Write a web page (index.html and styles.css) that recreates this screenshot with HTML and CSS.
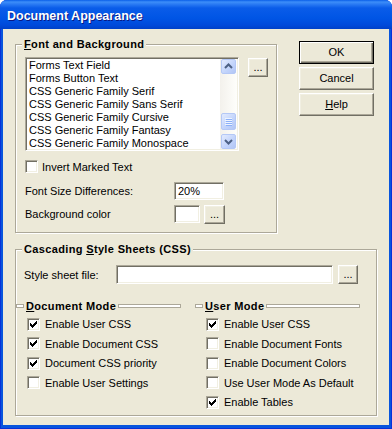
FILE: index.html
```html
<!DOCTYPE html>
<html>
<head>
<meta charset="utf-8">
<link rel="stylesheet" href="styles.css">
</head>
<body>
<div class="window">
  <div class="titlebar"><span class="title">Document Appearance</span></div>
  <div class="client">
    <div class="top">
      <fieldset class="group g-font">
        <legend><u>F</u>ont and Background</legend>
        <div class="list-row">
          <div class="listbox">
            <ul class="items">
              <li>Forms Text Field</li>
              <li>Forms Button Text</li>
              <li>CSS Generic Family Serif</li>
              <li>CSS Generic Family Sans Serif</li>
              <li>CSS Generic Family Cursive</li>
              <li>CSS Generic Family Fantasy</li>
              <li>CSS Generic Family Monospace</li>
            </ul>
            <div class="scrollbar">
              <div class="sb-btn"><svg width="13" height="13" viewBox="0 0 13 13"><path d="M3 8L6.5 4.5L10 8" fill="none" stroke="#4D6185" stroke-width="2"/></svg></div>
              <div class="sb-space"></div>
              <div class="sb-thumb"><svg width="7" height="8" viewBox="0 0 7 8"><path d="M0 0.5h7M0 2.5h7M0 4.5h7M0 6.5h7" stroke="#EEF4FE" stroke-width="1"/><path d="M1 1.5h7M1 3.5h7M1 5.5h7M1 7.5h7" stroke="#8CB0F8" stroke-width="1"/></svg></div>
              <div class="sb-btn"><svg width="13" height="13" viewBox="0 0 13 13"><path d="M3 5L6.5 8.5L10 5" fill="none" stroke="#4D6185" stroke-width="2"/></svg></div>
            </div>
          </div>
          <button class="btn dots">...</button>
        </div>
        <div class="check-row first"><span class="cb"></span><span>Invert Marked Text</span></div>
        <div class="field-row size-row"><span class="lbl">Font Size Differences:</span><span class="input size">20%</span></div>
        <div class="field-row bg-row"><span class="lbl">Background color</span><span class="input swatch"></span><button class="btn dots small">...</button></div>
      </fieldset>
      <div class="buttons">
        <button class="btn cmd default">OK</button>
        <button class="btn cmd">Cancel</button>
        <button class="btn cmd"><u>H</u>elp</button>
      </div>
    </div>
    <fieldset class="group g-css">
      <legend>Cascading <u>S</u>tyle Sheets (CSS)</legend>
      <div class="field-row file-row"><span class="lbl file-lbl">Style sheet file:</span><span class="input file"></span><button class="btn dots file-btn">...</button></div>
      <div class="modes">
        <div class="mode">
          <div class="mode-head"><span class="sep short"></span><span class="mode-title"><u>D</u>ocument Mode</span><span class="sep long"></span></div>
          <div class="check-row"><span class="cb"><svg class="tick" width="11" height="11" viewBox="0 0 11 11"><path d="M8 2h1v1h-1zM7 3h2v1h-2zM2 4h1v1h-1zM6 4h3v1h-3zM2 5h2v1h-2zM5 5h3v1h-3zM2 6h5v1h-5zM3 7h3v1h-3zM4 8h1v1h-1z" fill="#000"/></svg></span><span>Enable User CSS</span></div>
          <div class="check-row"><span class="cb"><svg class="tick" width="11" height="11" viewBox="0 0 11 11"><path d="M8 2h1v1h-1zM7 3h2v1h-2zM2 4h1v1h-1zM6 4h3v1h-3zM2 5h2v1h-2zM5 5h3v1h-3zM2 6h5v1h-5zM3 7h3v1h-3zM4 8h1v1h-1z" fill="#000"/></svg></span><span>Enable Document CSS</span></div>
          <div class="check-row"><span class="cb"><svg class="tick" width="11" height="11" viewBox="0 0 11 11"><path d="M8 2h1v1h-1zM7 3h2v1h-2zM2 4h1v1h-1zM6 4h3v1h-3zM2 5h2v1h-2zM5 5h3v1h-3zM2 6h5v1h-5zM3 7h3v1h-3zM4 8h1v1h-1z" fill="#000"/></svg></span><span>Document CSS priority</span></div>
          <div class="check-row"><span class="cb"></span><span>Enable User Settings</span></div>
        </div>
        <div class="mode">
          <div class="mode-head"><span class="sep short"></span><span class="mode-title"><u>U</u>ser Mode</span><span class="sep long"></span></div>
          <div class="check-row"><span class="cb"><svg class="tick" width="11" height="11" viewBox="0 0 11 11"><path d="M8 2h1v1h-1zM7 3h2v1h-2zM2 4h1v1h-1zM6 4h3v1h-3zM2 5h2v1h-2zM5 5h3v1h-3zM2 6h5v1h-5zM3 7h3v1h-3zM4 8h1v1h-1z" fill="#000"/></svg></span><span>Enable User CSS</span></div>
          <div class="check-row"><span class="cb"></span><span>Enable Document Fonts</span></div>
          <div class="check-row"><span class="cb"></span><span>Enable Document Colors</span></div>
          <div class="check-row"><span class="cb"></span><span>Use User Mode As Default</span></div>
          <div class="check-row"><span class="cb"><svg class="tick" width="11" height="11" viewBox="0 0 11 11"><path d="M8 2h1v1h-1zM7 3h2v1h-2zM2 4h1v1h-1zM6 4h3v1h-3zM2 5h2v1h-2zM5 5h3v1h-3zM2 6h5v1h-5zM3 7h3v1h-3zM4 8h1v1h-1z" fill="#000"/></svg></span><span>Enable Tables</span></div>
        </div>
      </div>
    </fieldset>
  </div>
</div>
</body>
</html>
```
FILE: styles.css
```css
* { box-sizing: border-box; }
html, body { margin: 0; padding: 0; background: #fff; }
body {
  font-family: "Liberation Sans", Arial, sans-serif;
  font-size: 11px;
  color: #000;
}
.window {
  width: 392px;
  height: 429px;
  display: flex;
  flex-direction: column;
  background: #0855DD;
  box-shadow: inset 1px 0 0 #0831D9, inset -1px 0 0 #0831D9, inset 0 -1px 0 #0831D9;
  border-radius: 7px 7px 0 0;
  overflow: hidden;
}
.titlebar {
  height: 29px;
  flex: none;
  display: flex;
  align-items: center;
  padding: 3px 0 0 7px;
  background: linear-gradient(#0A5FE8 0, #3D8EF9 2px, #2C7CF4 4px, #0A5CE9 8px, #0055E5 18px, #004ADB 25px, #0040C8 29px);
}
.title {
  color: #fff;
  font-weight: bold;
  font-size: 12.5px;
  text-shadow: 1px 1px 0 #0A1883;
}
.client {
  flex: 1;
  margin: 0 3px 4px 3px;
  background: #ECE9D8;
  padding: 9px 0 0 12px;
}
.top {
  display: flex;
  align-items: flex-start;
}
.group {
  margin: 0;
  padding: 0;
  min-width: 0;
  border: 1px solid #ACA899;
  box-shadow: inset 1px 1px 0 #fff, 1px 1px 0 #fff;
}
.group legend {
  padding: 0 2px;
  margin-left: 6px;
  font-weight: bold;
  line-height: 13px;
  letter-spacing: 0.35px;
  background: #ECE9D8;
}
.g-font {
  width: 262px;
  height: 195px;
  padding: 6px 0 0 9px;
}
.g-font legend { margin-left: -3px; }
.list-row {
  display: flex;
  align-items: flex-start;
  gap: 9px;
}
.listbox, .input {
  background: #fff;
  border: 1px solid;
  border-color: #ACA899 #fff #fff #ACA899;
  box-shadow: inset 1px 1px 0 #716F64, inset -1px -1px 0 #F1EFE2;
}
.listbox {
  width: 214px;
  height: 94px;
  display: flex;
  padding: 1px;
  overflow: hidden;
}
.items {
  list-style: none;
  margin: 0;
  padding: 0 0 0 2px;
  flex: 1;
  overflow: hidden;
}
.items li {
  line-height: 13px;
  white-space: nowrap;
}
.scrollbar {
  width: 17px;
  flex: none;
  display: flex;
  flex-direction: column;
  background: linear-gradient(to right, #F3F1EC, #FEFEFB);
  padding-left: 1px;
}
.sb-btn, .sb-thumb {
  width: 15px;
  display: flex;
  align-items: center;
  justify-content: center;
  border: 1px solid #B4C8F6;
  border-radius: 2px;
  background: linear-gradient(135deg, #E3EBFE, #C1D3FB 60%, #B2C6F5);
}
.sb-btn { height: 15px; }
.sb-space { flex: 1; }
.sb-thumb { height: 17px; margin-bottom: 4px; }
.btn {
  font: inherit;
  color: #000;
  background: #ECE9D8;
  border: 1px solid;
  border-color: #fff #716F64 #716F64 #fff;
  box-shadow: inset -1px -1px 0 #ACA899, inset 1px 1px 0 #F1EFE2;
  padding: 0;
  line-height: 13px;
}
.dots {
  width: 20px;
  height: 19px;
  margin-top: 1px;
}
.check-row {
  display: flex;
  align-items: center;
  gap: 5px;
  height: 13px;
}
.check-row.first {
  margin-top: 9px;
  gap: 4px;
}
.cb {
  width: 13px;
  height: 13px;
  flex: none;
  background: #fff;
  border: 1px solid;
  border-color: #ACA899 #fff #fff #ACA899;
  box-shadow: inset 1px 1px 0 #716F64, inset -1px -1px 0 #F1EFE2;
}
.tick { display: block; }
.field-row {
  display: flex;
  align-items: center;
}
.field-row .lbl { width: 149px; flex: none; }
.size-row { margin-top: 9px; }
.size { width: 50px; height: 18px; padding: 2px 0 0 3px; line-height: 13px; }
.bg-row { margin-top: 5px; align-items: flex-start; }
.bg-row .lbl { line-height: 18px; }
.swatch { width: 26px; height: 18px; }
.dots.small { width: 21px; margin: 0 0 0 4px; }
.buttons {
  margin-left: 22px;
  padding-top: 3px;
  display: flex;
  flex-direction: column;
  gap: 3px;
}
.cmd { width: 75px; height: 23px; }
.cmd.default {
  border: 1px solid #000;
  box-shadow: inset 1px 1px 0 #fff, inset -1px -1px 0 #716F64, inset -2px -2px 0 #ACA899;
}
.g-css {
  width: 362px;
  height: 173px;
  margin-top: 10px;
  padding: 9px 0 0 0;
}
.file-row { padding-left: 8px; }
.file-row .file-lbl { width: 92px; }
.file { width: 217px; height: 19px; }
.file-btn { margin: 0 0 0 5px; }
.modes {
  display: flex;
  gap: 14px;
  margin-top: 15px;
}
.mode {
  width: 165px;
  display: flex;
  flex-direction: column;
}
.mode-head {
  display: flex;
  align-items: center;
  gap: 2px;
  height: 13px;
  margin-bottom: 2.5px;
}
.mode-title { font-weight: bold; letter-spacing: 0.35px; white-space: nowrap; }
.sep {
  height: 4px;
  border: 1px solid #ACA899;
  background: #fff;
}
.sep.short { width: 8px; flex: none; }
.sep.long { flex: 1; }
.mode .check-row {
  height: 19.5px;
  padding-left: 11px;
}
```
